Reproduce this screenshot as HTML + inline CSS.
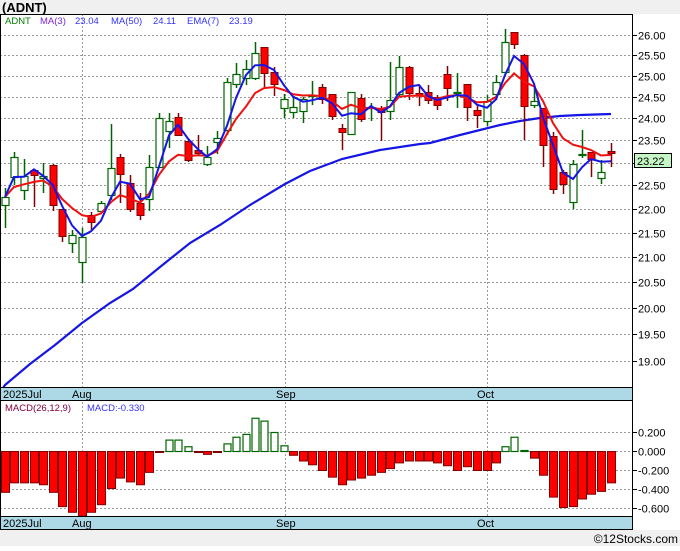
<!DOCTYPE html>
<html><head><meta charset="utf-8"><style>
html,body{margin:0;padding:0;background:#fff;}
body{width:680px;height:546px;overflow:hidden;font-family:"Liberation Sans",sans-serif;}
</style></head><body>
<svg id="s" width="680" height="546" xmlns="http://www.w3.org/2000/svg" font-family="Liberation Sans, sans-serif">
<rect x="0" y="0" width="680" height="546" fill="#fff"/>
<rect x="0" y="0" width="680" height="14" fill="#f0f0f0"/>
<text x="2" y="12" font-size="13" font-weight="bold" fill="#000">(ADNT)</text>
<rect x="0" y="530" width="680" height="16" fill="#f0f0f0"/>
<text x="678" y="543" font-size="12" text-anchor="end" fill="#000">©12Stocks.com</text>
<g id="grid"></g>
<g id="main"></g>
<rect x="0" y="387" width="632" height="14" fill="#add8e6"/>
<rect x="0" y="516" width="632" height="14" fill="#add8e6"/>
<g font-size="11" fill="#000">
<text x="3" y="398">2025Jul</text><text x="72" y="398">Aug</text><text x="276" y="398">Sep</text><text x="477" y="398">Oct</text>
<text x="3" y="527">2025Jul</text><text x="72" y="527">Aug</text><text x="276" y="527">Sep</text><text x="477" y="527">Oct</text>
</g>
<g stroke="#000" stroke-width="1" fill="none">
<line x1="0" y1="14.5" x2="632" y2="14.5"/>
<line x1="0" y1="387.5" x2="632" y2="387.5"/>
<line x1="0" y1="400.5" x2="632" y2="400.5"/>
<line x1="0" y1="516.5" x2="632" y2="516.5"/>
<line x1="0" y1="529.5" x2="632" y2="529.5"/>
<line x1="632.5" y1="14" x2="632.5" y2="530"/>
<line x1="0.5" y1="14" x2="0.5" y2="530"/>
</g>
<text x="5" y="24" font-size="9.5" fill="#008000">ADNT</text>
<text x="40" y="24" font-size="9.5" fill="#7b1fe0">MA(3)</text>
<text x="75" y="24" font-size="9.5" fill="#3333ff">23.04</text>
<text x="111" y="24" font-size="9.5" fill="#3333ff">MA(50)</text>
<text x="153" y="24" font-size="9.5" fill="#3333ff">24.11</text>
<text x="187" y="24" font-size="9.5" fill="#3333ff">EMA(7)</text>
<text x="229" y="24" font-size="9.5" fill="#3333ff">23.19</text>
<text x="5" y="411" font-size="9.5" fill="#800040">MACD(26,12,9)</text>
<text x="87" y="411" font-size="9.5" fill="#3333ff">MACD:-0.330</text>
<rect x="634.5" y="153.5" width="37" height="14" fill="#c6f5c6" stroke="#000"/>
<text x="637" y="165" font-size="11" fill="#000">23.22</text>
</svg>
<script>
var NS="http://www.w3.org/2000/svg",S=document.getElementById('s');
function el(p,t,a){var e=document.createElementNS(NS,t);for(var k in a)e.setAttribute(k,a[k]);p.appendChild(e);return e;}
var G=document.getElementById('grid'),M=document.getElementById('main');
function py(p){return 35+Math.log(26/p)*1040;}
var levels=[26,25.5,25,24.5,24,23.5,23,22.5,22,21.5,21,20.5,20,19.5,19];
levels.forEach(function(p){var y=Math.round(py(p))+0.5;
el(G,'line',{x1:0,y1:y,x2:632,y2:y,stroke:'#999','stroke-dasharray':'2,2'});
el(G,'line',{x1:632,y1:y,x2:637,y2:y,stroke:'#000'});
if(Math.abs(p-23)<0.01)return;
var t=el(G,'text',{x:638,y:y+4,'font-size':11,fill:'#000'});t.textContent=p.toFixed(2);});
[0.2,0,-0.2,-0.4,-0.6].forEach(function(v){var y=Math.round(451-v*95)+0.5;
el(G,'line',{x1:0,y1:y,x2:632,y2:y,stroke:'#999','stroke-dasharray':'2,2'});
el(G,'line',{x1:632,y1:y,x2:637,y2:y,stroke:'#000'});
var t=el(G,'text',{x:638,y:y+4,'font-size':11,fill:'#000'});t.textContent=v.toFixed(3).replace('-0.000','0.000');});
[82,285,487].forEach(function(x){el(G,'line',{x1:x+.5,y1:14,x2:x+.5,y2:530,stroke:'#999','stroke-dasharray':'2,2'});});
var C=[[5,'g',197,205,188,228],[14,'g',157,177,152,185],[24,'g',176,190,159,200],[34,'r',170,175,170,207],[43,'g',176,178,163,193],[53,'r',165,205,164,211],[62,'r',209,236,209,242],[72,'g',235,243,230,253],[82,'g',237,262,228,283],[91,'r',215,222,212,230],[101,'g',203,211,201,212],[111,'g',168,195,124,200],[120,'r',157,174,154,203],[130,'r',183,209,175,212],[140,'r',203,215,193,220],[149,'g',167,199,155,211],[159,'g',118,167,113,168],[169,'g',121,131,113,148],[178,'r',117,135,113,135],[188,'r',141,160,140,162],[198,'r',150,153,135,156],[207,'g',157,164,146,166],[217,'g',138,142,131,154],[227,'g',82,130,78,135],[236,'g',74,84,63,88],[246,'g',69,78,60,85],[255,'g',53,78,42,80],[264,'r',47,73,47,87],[274,'r',72,84,67,96],[284,'g',99,108,94,118],[293,'g',107,112,96,118],[303,'g',99,111,97,123],[312,'g',95,96,81,105],[322,'r',87,99,84,104],[332,'r',94,116,94,120],[342,'r',128,132,124,150],[351,'g',92,134,92,134],[361,'r',98,119,94,122],[371,'g',107,108,103,121],[381,'r',109,112,106,141],[390,'g',100,111,62,120],[399,'g',67,94,56,97],[409,'r',67,93,66,100],[419,'r',93,95,85,106],[428,'r',92,100,85,104],[437,'r',97,105,95,110],[447,'r',74,88,66,101],[457,'g',92,93,73,108],[467,'r',84,107,84,121],[477,'r',110,115,105,128],[487,'g',101,121,95,126],[496,'g',82,94,75,100],[505,'g',42,72,29,72],[514,'r',32,44,32,49],[524,'r',55,106,54,140],[534,'g',101,105,88,108],[543,'r',108,145,108,167],[553,'r',136,189,132,194],[563,'r',172,184,170,194],[573,'g',164,202,160,209],[582,'g',154,155,130,158],[591,'r',152,159,152,177],[601,'g',172,178,160,184],[611,'r',151,153,143,167]];
el(M,'polyline',{points:'3,388 5,385 30,364 55,345 82,323 110,303 133,289 160,267 190,243 220,225 250,205 285,184 310,171 342,159 380,150 420,144 430,143 460,135 480,130 500,125 520,121 540,118 560,116 580,115 611,114',fill:'none',stroke:'#1515e6','stroke-width':2.2});
var closes=C.map(function(c){return c[1]=='g'?c[2]:c[3];});
var e=[],k=2/8;closes.forEach(function(v,i){e.push(i==0?v:e[i-1]+k*(v-e[i-1]));});
var m=closes.map(function(v,i){var a=closes.slice(Math.max(0,i-2),i+1);return a.reduce(function(s,x){return s+x;},0)/a.length;});
C.forEach(function(c){var col=c[1]=='g'?'#006400':'#800000';
el(M,'line',{x1:c[0]+.5,y1:c[4],x2:c[0]+.5,y2:c[5],stroke:col,'stroke-width':1.5});
var h=Math.max(1,c[3]-c[2]);
if(c[1]=='g')el(M,'rect',{x:c[0]-3,y:c[2]+.5,width:7,height:h,fill:'#fff',stroke:'#006400','stroke-width':1.2});
else el(M,'rect',{x:c[0]-3,y:c[2]+.5,width:7,height:h,fill:'#f00',stroke:'#800000','stroke-width':1});});
el(M,'polyline',{points:C.map(function(c,i){return c[0]+','+e[i].toFixed(1);}).join(' '),fill:'none',stroke:'#f01010','stroke-width':2});
el(M,'polyline',{points:C.map(function(c,i){return c[0]+','+m[i].toFixed(1);}).join(' '),fill:'none',stroke:'#1515e6','stroke-width':2});
var V=[-0.43,-0.33,-0.33,-0.33,-0.35,-0.43,-0.58,-0.64,-0.68,-0.64,-0.56,-0.39,-0.28,-0.32,-0.35,-0.22,-0.005,0.12,0.12,0.05,0.0,-0.03,0.0,0.08,0.15,0.18,0.35,0.32,0.2,0.06,-0.04,-0.1,-0.14,-0.2,-0.27,-0.35,-0.3,-0.28,-0.25,-0.22,-0.18,-0.12,-0.1,-0.1,-0.1,-0.12,-0.15,-0.2,-0.16,-0.2,-0.2,-0.12,0.05,0.15,0.005,-0.07,-0.25,-0.48,-0.59,-0.58,-0.5,-0.45,-0.42,-0.33];
C.forEach(function(c,i){var v=V[i],y0=451;var h=Math.max(1,Math.abs(v)*95);
if(v>0)el(M,'rect',{x:c[0]-3,y:y0-h+.5,width:7,height:h,fill:'#fff',stroke:'#006400','stroke-width':1.2});
else el(M,'rect',{x:c[0]-3.5,y:y0+.5,width:8,height:h,fill:'#f00',stroke:'#800000','stroke-width':1});});
</script>
</body></html>
